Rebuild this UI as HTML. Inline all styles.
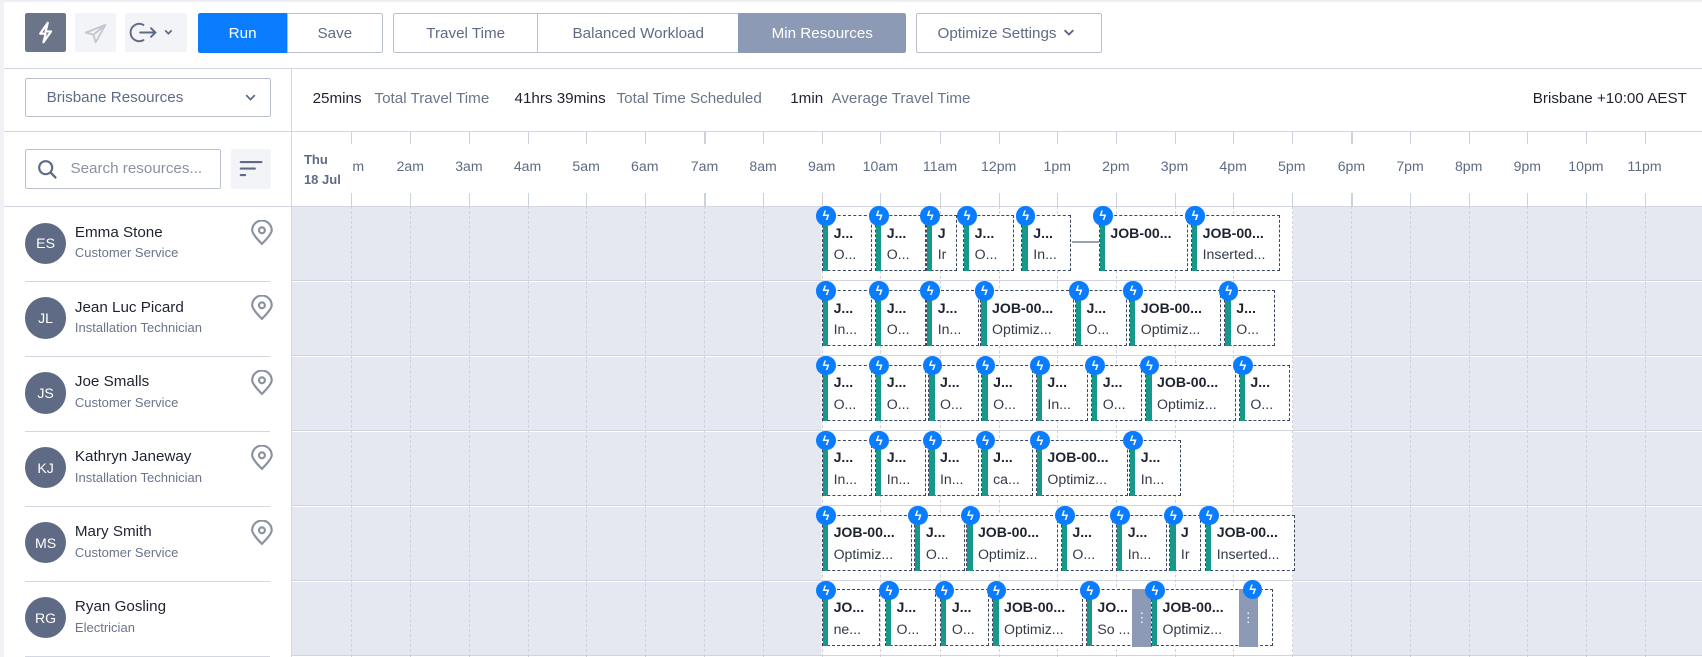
<!DOCTYPE html>
<html><head><meta charset="utf-8"><style>
*{box-sizing:border-box;margin:0;padding:0}
html,body{width:1702px;height:657px;overflow:hidden;background:#fff}
#w{zoom:1.0855;width:1568px;height:605px;position:relative;font-family:"Liberation Sans",sans-serif;color:#1f2330;overflow:hidden;background:#fff}
.a{position:absolute}
.btn{position:absolute;display:flex;align-items:center;justify-content:center;font-size:14px;color:#5f6b85;border:1px solid #b9bfcc;background:#fff}
.hr{position:absolute;left:0;right:0;height:1px;background:#d3d7e0}
.tick{position:absolute;width:1px;height:12px;background:#cdd1db}
.hl{position:absolute;top:146px;font-size:13px;color:#5f6b85;width:60px;margin-left:-30px;text-align:center}
.vd{position:absolute;top:190px;height:415px;border-left:1px dashed #cfd3dc}
.row{position:absolute;left:269px;right:0;height:68px;background:linear-gradient(90deg,#e5e8f0 0,#e5e8f0 488px,#fff 488px,#fff 922px,#e5e8f0 922px)}
.rs{position:absolute;left:269px;right:0;height:1px;background:#d0d4de}
.av{position:absolute;left:23px;width:38px;height:38px;border-radius:50%;background:#5f6b85;color:#fff;font-size:13px;display:flex;align-items:center;justify-content:center}
.nm{position:absolute;left:69px;font-size:14px;color:#1f2330}
.sb{position:absolute;left:69px;font-size:12px;color:#6b7489}
.sep{position:absolute;left:23px;width:226px;height:1px;background:#d3d7e0}
.pin{position:absolute;left:230px}
.j{position:absolute;height:52px;border:1px dashed #3b4660;background:#fff;overflow:visible;white-space:nowrap}
.j::before{content:"";position:absolute;left:0;top:0;bottom:-1px;width:5px;background:#16998a}
.j.n::before{display:none}
.j i{position:absolute;left:-6px;top:-9px;width:18px;height:18px;border-radius:50%;background:#0a7cff;color:#fff;font-style:normal;font-size:12px;font-weight:bold;line-height:18px;text-align:center}
.j b{position:absolute;left:10px;top:8px;font-size:13px;color:#1f2330;overflow:hidden;right:2px}
.j span{position:absolute;left:10px;top:28px;font-size:13px;color:#333a48;overflow:hidden;right:2px}
.hd{position:absolute;width:18px;height:53px;background:#8c9ab5;color:#fff;font-size:12px;text-align:center;line-height:53px}
.st span{position:absolute;top:0;white-space:nowrap;font-size:14px}
</style></head><body><div id="w">
<div class="a" style="left:0;top:0;width:1568px;height:3px;background:linear-gradient(#e6e8ee,#fff)"></div>
<div class="a" style="left:0;top:0;width:4px;height:605px;background:#f0f1f5"></div>
<!-- toolbar -->
<div class="a" style="left:23px;top:12px;width:38px;height:36px;background:#6b7489;border-radius:2px"><svg width="38" height="36" viewBox="0 0 38 36"><path d="M21 9 L14 19 H19 L17 27 L24 17 H19 Z" fill="none" stroke="#fff" stroke-width="2" stroke-linejoin="round"/></svg></div>
<div class="a" style="left:69px;top:12px;width:38px;height:36px;background:#f3f4f8;border-radius:2px"><svg width="38" height="36" viewBox="0 0 38 36"><path d="M28 11 L10 18 L17 20 L19 27 Z M28 11 L17 20" fill="none" stroke="#c3c8d3" stroke-width="1.8" stroke-linejoin="round"/></svg></div>
<div class="a" style="left:115px;top:12px;width:57px;height:36px;background:#f3f4f8;border-radius:2px"><svg width="57" height="36" viewBox="0 0 57 36"><path d="M17 11 A8 8 0 1 0 17 25 M14 18 H28 M24 14 L28 18 L24 22" fill="none" stroke="#5f6b85" stroke-width="1.8" stroke-linecap="round"/><path d="M37 16 L40 19 L43 16" fill="none" stroke="#5f6b85" stroke-width="1.6"/></svg></div>
<div class="btn" style="left:182px;top:12px;width:83px;height:37px;background:#0a7cff;border-color:#0a7cff;color:#fff;border-radius:2px 0 0 2px">Run</div>
<div class="btn" style="left:264px;top:12px;width:89px;height:37px;border-radius:0 2px 2px 0">Save</div>
<div class="btn" style="left:362px;top:12px;width:134px;height:37px;border-radius:2px 0 0 2px">Travel Time</div>
<div class="btn" style="left:495px;top:12px;width:186px;height:37px">Balanced Workload</div>
<div class="btn" style="left:680px;top:12px;width:155px;height:37px;background:#8c9ab5;border-color:#8c9ab5;color:#fff;border-radius:0 2px 2px 0">Min Resources</div>
<div class="btn" style="left:844px;top:12px;width:171px;height:37px;border-radius:2px">Optimize Settings <svg width="22" height="10" viewBox="0 0 22 10"><path d="M7 2 L11 6 L15 2" fill="none" stroke="#5f6b85" stroke-width="1.8"/></svg></div>
<div class="hr" style="top:63px;left:4px"></div>
<!-- row 2 -->
<div class="a" style="left:268px;top:64px;width:1px;height:541px;background:#d3d7e0"></div>
<div class="btn" style="left:23px;top:72px;width:227px;height:36px;justify-content:flex-start;padding-left:19px;border-radius:2px;font-size:14px">Brisbane Resources<svg class="a" style="right:12px;top:13px" width="12" height="8" viewBox="0 0 12 8"><path d="M2 2 L6 6 L10 2" fill="none" stroke="#5f6b85" stroke-width="1.6"/></svg></div>
<div class="a st" style="left:0;top:83px;width:1000px;height:20px">
<span style="left:288px;color:#1f2330">25mins</span><span style="left:345px;color:#6b7489">Total Travel Time</span>
<span style="left:474px;color:#1f2330">41hrs 39mins</span><span style="left:568px;color:#6b7489">Total Time Scheduled</span>
<span style="left:728px;color:#1f2330">1min</span><span style="left:766px;color:#6b7489">Average Travel Time</span></div>
<div class="a" style="right:14px;top:83px;font-size:14px;color:#1f2330">Brisbane +10:00 AEST</div>
<div class="hr" style="top:121px;left:4px"></div>
<!-- row 3 -->
<div class="btn" style="left:23px;top:137px;width:181px;height:37px;justify-content:flex-start;padding-left:41px;color:#8a91a1;border-radius:2px">Search resources...<svg class="a" style="left:10px;top:9px" width="20" height="20" viewBox="0 0 20 20"><circle cx="8" cy="8" r="6" fill="none" stroke="#5f6b85" stroke-width="2"/><path d="M12.5 12.5 L17 17" stroke="#5f6b85" stroke-width="2.2" stroke-linecap="round"/></svg></div>
<div class="a" style="left:213px;top:137px;width:37px;height:37px;background:#f3f4f8;border-radius:2px"><svg width="37" height="37" viewBox="0 0 37 37"><path d="M9 12 H28 M9 18 H22 M9 24 H13" stroke="#5f6b85" stroke-width="2" stroke-linecap="round"/></svg></div>
<div class="a" style="left:280px;top:138px;font-size:12px;font-weight:bold;color:#5f6b85;line-height:19px">Thu<br>18 Jul</div>
<div class="hr" style="top:190px;left:4px;background:#d3d7e0"></div>
<!-- rows bg -->
<div class="row" style="top:191px"></div><div class="rs" style="top:258px"></div>
<div class="row" style="top:260px"></div><div class="rs" style="top:327px"></div>
<div class="row" style="top:329px"></div><div class="rs" style="top:396px"></div>
<div class="row" style="top:398px"></div><div class="rs" style="top:465px"></div>
<div class="row" style="top:467px"></div><div class="rs" style="top:534px"></div>
<div class="row" style="top:536px"></div><div class="rs" style="top:603px"></div>
<!-- ticks + labels + dashed -->
<div class="tick" style="left:323px;top:121px"></div><div class="tick" style="left:323px;top:178px"></div><div class="hl" style="left:330px">m</div><div class="vd" style="left:323px"></div>
<div class="tick" style="left:378px;top:121px"></div><div class="tick" style="left:378px;top:178px"></div><div class="hl" style="left:378px">2am</div><div class="vd" style="left:378px"></div>
<div class="tick" style="left:432px;top:121px"></div><div class="tick" style="left:432px;top:178px"></div><div class="hl" style="left:432px">3am</div><div class="vd" style="left:432px"></div>
<div class="tick" style="left:486px;top:121px"></div><div class="tick" style="left:486px;top:178px"></div><div class="hl" style="left:486px">4am</div><div class="vd" style="left:486px"></div>
<div class="tick" style="left:540px;top:121px"></div><div class="tick" style="left:540px;top:178px"></div><div class="hl" style="left:540px">5am</div><div class="vd" style="left:540px"></div>
<div class="tick" style="left:594px;top:121px"></div><div class="tick" style="left:594px;top:178px"></div><div class="hl" style="left:594px">6am</div><div class="vd" style="left:594px"></div>
<div class="tick" style="left:649px;top:121px"></div><div class="tick" style="left:649px;top:178px"></div><div class="hl" style="left:649px">7am</div><div class="vd" style="left:649px"></div>
<div class="tick" style="left:703px;top:121px"></div><div class="tick" style="left:703px;top:178px"></div><div class="hl" style="left:703px">8am</div><div class="vd" style="left:703px"></div>
<div class="tick" style="left:757px;top:121px"></div><div class="tick" style="left:757px;top:178px"></div><div class="hl" style="left:757px">9am</div><div class="vd" style="left:757px"></div>
<div class="tick" style="left:811px;top:121px"></div><div class="tick" style="left:811px;top:178px"></div><div class="hl" style="left:811px">10am</div><div class="vd" style="left:811px"></div>
<div class="tick" style="left:866px;top:121px"></div><div class="tick" style="left:866px;top:178px"></div><div class="hl" style="left:866px">11am</div><div class="vd" style="left:866px"></div>
<div class="tick" style="left:920px;top:121px"></div><div class="tick" style="left:920px;top:178px"></div><div class="hl" style="left:920px">12pm</div><div class="vd" style="left:920px"></div>
<div class="tick" style="left:974px;top:121px"></div><div class="tick" style="left:974px;top:178px"></div><div class="hl" style="left:974px">1pm</div><div class="vd" style="left:974px"></div>
<div class="tick" style="left:1028px;top:121px"></div><div class="tick" style="left:1028px;top:178px"></div><div class="hl" style="left:1028px">2pm</div><div class="vd" style="left:1028px"></div>
<div class="tick" style="left:1082px;top:121px"></div><div class="tick" style="left:1082px;top:178px"></div><div class="hl" style="left:1082px">3pm</div><div class="vd" style="left:1082px"></div>
<div class="tick" style="left:1136px;top:121px"></div><div class="tick" style="left:1136px;top:178px"></div><div class="hl" style="left:1136px">4pm</div><div class="vd" style="left:1136px"></div>
<div class="tick" style="left:1190px;top:121px"></div><div class="tick" style="left:1190px;top:178px"></div><div class="hl" style="left:1190px">5pm</div><div class="vd" style="left:1190px"></div>
<div class="tick" style="left:1245px;top:121px"></div><div class="tick" style="left:1245px;top:178px"></div><div class="hl" style="left:1245px">6pm</div><div class="vd" style="left:1245px"></div>
<div class="tick" style="left:1299px;top:121px"></div><div class="tick" style="left:1299px;top:178px"></div><div class="hl" style="left:1299px">7pm</div><div class="vd" style="left:1299px"></div>
<div class="tick" style="left:1353px;top:121px"></div><div class="tick" style="left:1353px;top:178px"></div><div class="hl" style="left:1353px">8pm</div><div class="vd" style="left:1353px"></div>
<div class="tick" style="left:1407px;top:121px"></div><div class="tick" style="left:1407px;top:178px"></div><div class="hl" style="left:1407px">9pm</div><div class="vd" style="left:1407px"></div>
<div class="tick" style="left:1461px;top:121px"></div><div class="tick" style="left:1461px;top:178px"></div><div class="hl" style="left:1461px">10pm</div><div class="vd" style="left:1461px"></div>
<div class="tick" style="left:1515px;top:121px"></div><div class="tick" style="left:1515px;top:178px"></div><div class="hl" style="left:1515px">11pm</div><div class="vd" style="left:1515px"></div>
<!-- resources -->
<div class="av" style="top:205px">ES</div><div class="nm" style="top:206px">Emma Stone</div><div class="sb" style="top:226px">Customer Service</div><div class="sep" style="top:259px"></div>
<div class="av" style="top:274px">JL</div><div class="nm" style="top:275px">Jean Luc Picard</div><div class="sb" style="top:295px">Installation Technician</div><div class="sep" style="top:328px"></div>
<div class="av" style="top:343px">JS</div><div class="nm" style="top:344px">Joe Smalls</div><div class="sb" style="top:364px">Customer Service</div><div class="sep" style="top:397px"></div>
<div class="av" style="top:412px">KJ</div><div class="nm" style="top:413px">Kathryn Janeway</div><div class="sb" style="top:433px">Installation Technician</div><div class="sep" style="top:466px"></div>
<div class="av" style="top:481px">MS</div><div class="nm" style="top:482px">Mary Smith</div><div class="sb" style="top:502px">Customer Service</div><div class="sep" style="top:535px"></div>
<div class="av" style="top:550px">RG</div><div class="nm" style="top:551px">Ryan Gosling</div><div class="sb" style="top:571px">Electrician</div><div class="sep" style="top:604px"></div>
<svg class="pin" style="top:203px" width="22" height="24" viewBox="0 0 22 24"><path d="M11 22 C4.5 15.5 2 12 2 9.5 A9 9 0 0 1 20 9.5 C20 12 17.5 15.5 11 22 Z" fill="none" stroke="#8a91a1" stroke-width="2"/><circle cx="11" cy="9.5" r="2.7" fill="none" stroke="#8a91a1" stroke-width="2"/></svg>
<svg class="pin" style="top:272px" width="22" height="24" viewBox="0 0 22 24"><path d="M11 22 C4.5 15.5 2 12 2 9.5 A9 9 0 0 1 20 9.5 C20 12 17.5 15.5 11 22 Z" fill="none" stroke="#8a91a1" stroke-width="2"/><circle cx="11" cy="9.5" r="2.7" fill="none" stroke="#8a91a1" stroke-width="2"/></svg>
<svg class="pin" style="top:341px" width="22" height="24" viewBox="0 0 22 24"><path d="M11 22 C4.5 15.5 2 12 2 9.5 A9 9 0 0 1 20 9.5 C20 12 17.5 15.5 11 22 Z" fill="none" stroke="#8a91a1" stroke-width="2"/><circle cx="11" cy="9.5" r="2.7" fill="none" stroke="#8a91a1" stroke-width="2"/></svg>
<svg class="pin" style="top:410px" width="22" height="24" viewBox="0 0 22 24"><path d="M11 22 C4.5 15.5 2 12 2 9.5 A9 9 0 0 1 20 9.5 C20 12 17.5 15.5 11 22 Z" fill="none" stroke="#8a91a1" stroke-width="2"/><circle cx="11" cy="9.5" r="2.7" fill="none" stroke="#8a91a1" stroke-width="2"/></svg>
<svg class="pin" style="top:479px" width="22" height="24" viewBox="0 0 22 24"><path d="M11 22 C4.5 15.5 2 12 2 9.5 A9 9 0 0 1 20 9.5 C20 12 17.5 15.5 11 22 Z" fill="none" stroke="#8a91a1" stroke-width="2"/><circle cx="11" cy="9.5" r="2.7" fill="none" stroke="#8a91a1" stroke-width="2"/></svg>
<!-- jobs row1 -->
<div class="a" style="left:988px;top:222px;width:24px;height:2px;background:#9aa2b2"></div>
<div class="j" style="left:757px;top:198px;width:46px"><i>ϟ</i><b>J...</b><span>O...</span></div>
<div class="j" style="left:806px;top:198px;width:47px"><i>ϟ</i><b>J...</b><span>O...</span></div>
<div class="j" style="left:853px;top:198px;width:29px"><i>ϟ</i><b>J</b><span>Ir</span></div>
<div class="j" style="left:887px;top:198px;width:47px"><i>ϟ</i><b>J...</b><span>O...</span></div>
<div class="j" style="left:941px;top:198px;width:46px"><i>ϟ</i><b>J...</b><span>In...</span></div>
<div class="j" style="left:1012px;top:198px;width:82px"><i>ϟ</i><b>JOB-00...</b><span></span></div>
<div class="j" style="left:1097px;top:198px;width:82px"><i>ϟ</i><b>JOB-00...</b><span>Inserted...</span></div>
<!-- row2 -->
<div class="j" style="left:757px;top:267px;width:46px"><i>ϟ</i><b>J...</b><span>In...</span></div>
<div class="j" style="left:806px;top:267px;width:47px"><i>ϟ</i><b>J...</b><span>O...</span></div>
<div class="j" style="left:853px;top:267px;width:49px"><i>ϟ</i><b>J...</b><span>In...</span></div>
<div class="j" style="left:903px;top:267px;width:86px"><i>ϟ</i><b>JOB-00...</b><span>Optimiz...</span></div>
<div class="j" style="left:990px;top:267px;width:48px"><i>ϟ</i><b>J...</b><span>O...</span></div>
<div class="j" style="left:1040px;top:267px;width:85px"><i>ϟ</i><b>JOB-00...</b><span>Optimiz...</span></div>
<div class="j" style="left:1128px;top:267px;width:47px"><i>ϟ</i><b>J...</b><span>O...</span></div>
<!-- row3 -->
<div class="j" style="left:757px;top:336px;width:46px"><i>ϟ</i><b>J...</b><span>O...</span></div>
<div class="j" style="left:806px;top:336px;width:47px"><i>ϟ</i><b>J...</b><span>O...</span></div>
<div class="j" style="left:855px;top:336px;width:47px"><i>ϟ</i><b>J...</b><span>O...</span></div>
<div class="j" style="left:904px;top:336px;width:48px"><i>ϟ</i><b>J...</b><span>O...</span></div>
<div class="j" style="left:954px;top:336px;width:48px"><i>ϟ</i><b>J...</b><span>In...</span></div>
<div class="j" style="left:1005px;top:336px;width:47px"><i>ϟ</i><b>J...</b><span>O...</span></div>
<div class="j" style="left:1055px;top:336px;width:84px"><i>ϟ</i><b>JOB-00...</b><span>Optimiz...</span></div>
<div class="j" style="left:1141px;top:336px;width:47px"><i>ϟ</i><b>J...</b><span>O...</span></div>
<!-- row4 -->
<div class="j" style="left:757px;top:405px;width:46px"><i>ϟ</i><b>J...</b><span>In...</span></div>
<div class="j" style="left:806px;top:405px;width:47px"><i>ϟ</i><b>J...</b><span>In...</span></div>
<div class="j" style="left:855px;top:405px;width:47px"><i>ϟ</i><b>J...</b><span>In...</span></div>
<div class="j" style="left:904px;top:405px;width:48px"><i>ϟ</i><b>J...</b><span>ca...</span></div>
<div class="j" style="left:954px;top:405px;width:85px"><i>ϟ</i><b>JOB-00...</b><span>Optimiz...</span></div>
<div class="j" style="left:1040px;top:405px;width:48px"><i>ϟ</i><b>J...</b><span>In...</span></div>
<!-- row5 -->
<div class="j" style="left:757px;top:474px;width:83px"><i>ϟ</i><b>JOB-00...</b><span>Optimiz...</span></div>
<div class="j" style="left:842px;top:474px;width:47px"><i>ϟ</i><b>J...</b><span>O...</span></div>
<div class="j" style="left:890px;top:474px;width:85px"><i>ϟ</i><b>JOB-00...</b><span>Optimiz...</span></div>
<div class="j" style="left:977px;top:474px;width:48px"><i>ϟ</i><b>J...</b><span>O...</span></div>
<div class="j" style="left:1028px;top:474px;width:47px"><i>ϟ</i><b>J...</b><span>In...</span></div>
<div class="j" style="left:1077px;top:474px;width:29px"><i>ϟ</i><b>J</b><span>Ir</span></div>
<div class="j" style="left:1110px;top:474px;width:83px"><i>ϟ</i><b>JOB-00...</b><span>Inserted...</span></div>
<!-- row6 -->
<div class="j" style="left:757px;top:543px;width:54px"><i>ϟ</i><b>JO...</b><span>ne...</span></div>
<div class="j" style="left:815px;top:543px;width:47px"><i>ϟ</i><b>J...</b><span>O...</span></div>
<div class="j" style="left:866px;top:543px;width:45px"><i>ϟ</i><b>J...</b><span>O...</span></div>
<div class="j" style="left:914px;top:543px;width:84px"><i>ϟ</i><b>JOB-00...</b><span>Optimiz...</span></div>
<div class="j" style="left:1000px;top:543px;width:60px"><i>ϟ</i><b>JO...</b><span>So ...</span></div>
<div class="hd" style="left:1043px;top:543px">⋮</div>
<div class="j" style="left:1060px;top:543px;width:113px"><i>ϟ</i><b>JOB-00...</b><span>Optimiz...</span></div>
<div class="hd" style="left:1141px;top:543px">⋮</div>
<div class="j n" style="left:1151px;top:543px;width:0;border:none;z-index:2"><i>ϟ</i></div>
</div></body></html>
